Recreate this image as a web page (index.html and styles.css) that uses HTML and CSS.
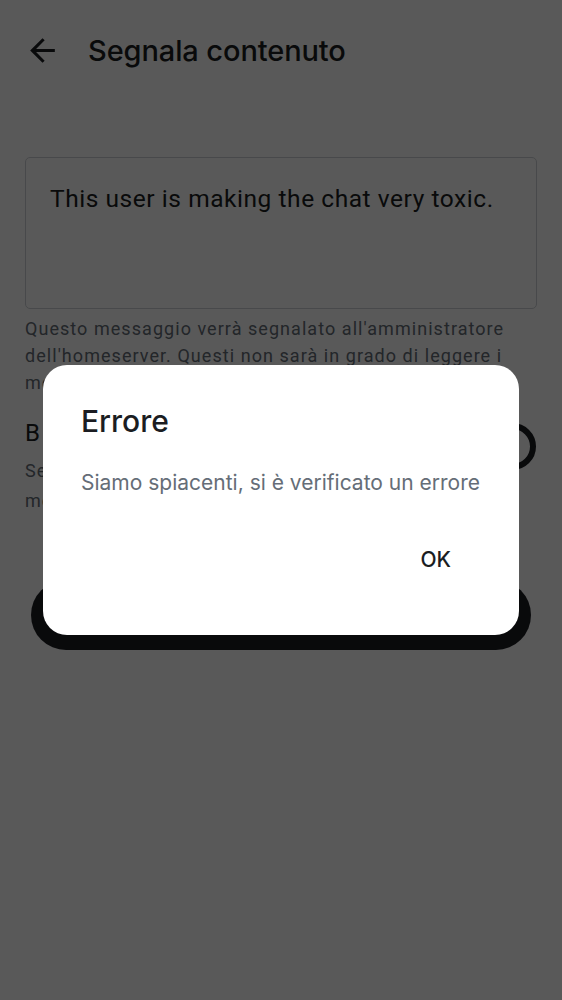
FILE: index.html
```html
<!DOCTYPE html>
<html lang="it">
<head>
<meta charset="utf-8">
<title>Segnala contenuto</title>
<link rel="stylesheet" href="styles.css">
</head>
<body>
<div class="screen">
  <header class="topbar">
    <button class="back" aria-label="Indietro">
      <svg viewBox="0 0 24 24" width="37" height="37"><path d="M20 11H7.83l5.59-5.59L12 4l-8 8 8 8 1.41-1.41L7.83 13H20v-2z" fill="#1b1d22"/></svg>
    </button>
    <h1 class="title">Segnala contenuto</h1>
  </header>

  <main class="content">
    <div class="field">This user is making the chat very toxic.</div>
    <p class="helper">Questo messaggio verrà segnalato all'amministratore dell'homeserver. Questi non sarà in grado di leggere i messaggi criptati.</p>

    <div class="block-row">
      <div class="block-text">
        <div class="block-title">Blocca utente</div>
        <div class="block-desc">Seleziona se vuoi nascondere tutti i messaggi attuali e futuri di questo utente</div>
      </div>
      <div class="switch"><span class="thumb"></span></div>
    </div>

    <button class="send">Invia segnalazione</button>
  </main>
</div>

<div class="scrim">
  <div class="dialog" role="alertdialog">
    <h2 class="dlg-title">Errore</h2>
    <p class="dlg-body">Siamo spiacenti, si è verificato un errore</p>
    <div class="dlg-actions">
      <button class="dlg-ok">OK</button>
    </div>
  </div>
</div>
</body>
</html>
```

FILE: styles.css
```css
* { box-sizing: border-box; }

html, body {
  margin: 0;
  padding: 0;
  background: #ffffff;
}

body {
  font-family: Roboto, "Noto Sans", sans-serif;
  color: #1b1d22;
  width: 562px;
  height: 1000px;
  overflow: hidden;
}

.screen {
  width: 562px;
  height: 1000px;
  background: #ffffff;
}

.topbar {
  height: 100px;
  display: flex;
  align-items: center;
  padding-left: 24px;
}

.back {
  width: 37px;
  height: 37px;
  padding: 0;
  margin: 0;
  border: 0;
  background: none;
  display: flex;
}

.title {
  margin: 0 0 0 27px;
  font-family: Inter, Roboto, sans-serif;
  font-weight: 500;
  font-size: 29px;
  color: #1b1d22;
  letter-spacing: -0.1px;
}

.content {
  padding: 57px 25px 0 25px;
}

.field {
  height: 152px;
  border: 1px solid #cdd1d6;
  border-radius: 5px;
  padding: 26px 24px;
  font-size: 24.5px;
  line-height: 30px;
  letter-spacing: 0.55px;
  color: #1b1d22;
}

.helper {
  margin: 6px 0 0 0;
  font-size: 18px;
  line-height: 27px;
  letter-spacing: 1.05px;
  color: #656d77;
}

.block-row {
  display: flex;
  align-items: flex-start;
  gap: 20px;
  margin-top: 22px;
}

.block-text {
  flex: 1;
}

.block-title {
  font-size: 24px;
  line-height: 30px;
  letter-spacing: 2px;
  color: #1b1d22;
}

.block-desc {
  margin-top: 8px;
  font-size: 18px;
  line-height: 30px;
  letter-spacing: 1px;
  color: #656d77;
  max-width: 380px;
}

.switch {
  position: relative;
  width: 76px;
  height: 47px;
  margin-top: 5px;
  margin-right: 1px;
  border: 6px solid #1b1d22;
  border-radius: 24px;
  flex: none;
}

.thumb {
  position: absolute;
  left: 6px;
  top: 6px;
  width: 23px;
  height: 23px;
  border-radius: 50%;
  background: #1b1d22;
}

.send {
  display: block;
  width: 500px;
  height: 70px;
  margin: 64px 0 0 6px;
  border: 0;
  border-radius: 35px;
  background: #1b1d22;
  color: #ffffff;
  font-family: Inter, Roboto, sans-serif;
  font-size: 21px;
  font-weight: 500;
}

.scrim {
  position: fixed;
  inset: 0;
  background: rgba(0, 0, 0, 0.65);
  display: flex;
  align-items: center;
  justify-content: center;
}

.dialog {
  width: 476px;
  height: 270px;
  background: #ffffff;
  border-radius: 24px;
  padding: 38px 38px 0 38px;
  display: flex;
  flex-direction: column;
}

.dlg-title {
  margin: 0;
  font-family: Inter, Roboto, sans-serif;
  font-weight: 500;
  font-size: 30px;
  line-height: 36px;
  color: #1b1d22;
}

.dlg-body {
  margin: 30px 0 0 0;
  font-family: Inter, Roboto, sans-serif;
  font-size: 21px;
  line-height: 28px;
  color: #656d77;
}

.dlg-actions {
  display: flex;
  justify-content: flex-end;
  margin-top: 42px;
  margin-right: 14px;
}

.dlg-ok {
  border: 0;
  background: none;
  padding: 8px 16px;
  font-family: Inter, Roboto, sans-serif;
  font-size: 21px;
  font-weight: 500;
  color: #1b1d22;
}
```
